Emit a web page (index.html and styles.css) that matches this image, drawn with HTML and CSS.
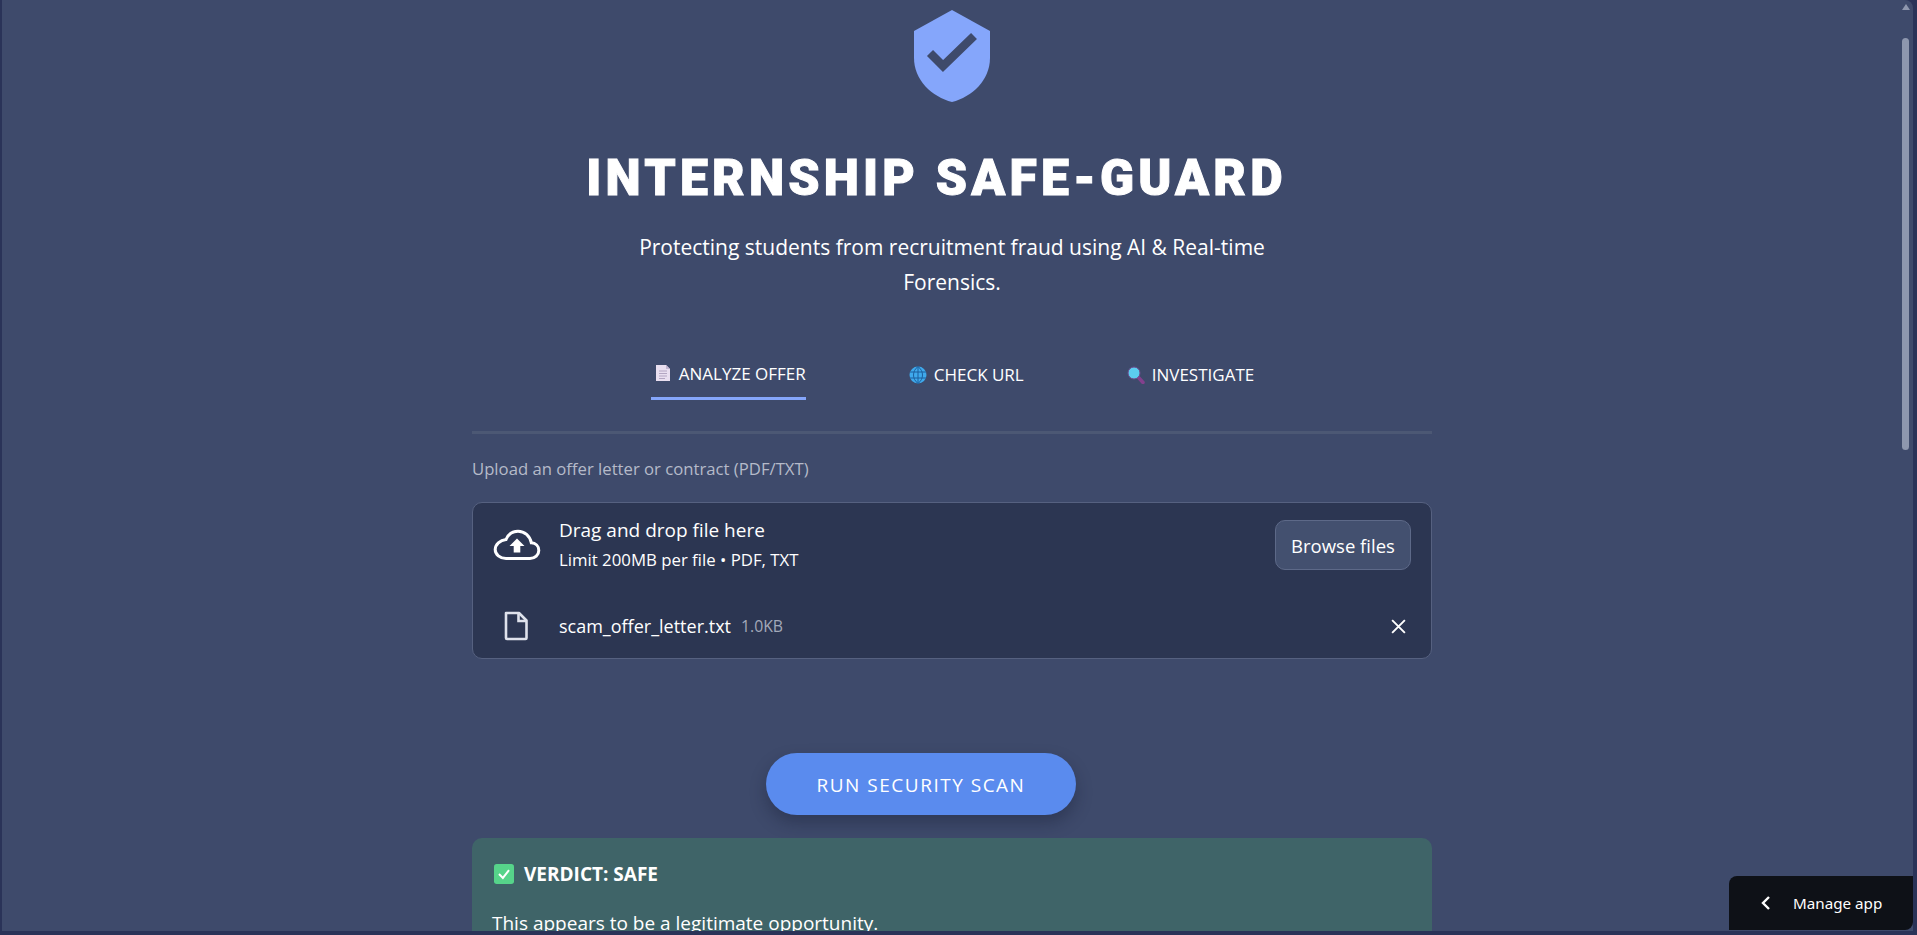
FILE: index.html
```html
<!DOCTYPE html>
<html lang="en">
<head>
    <meta charset="UTF-8">
    <meta name="viewport" content="width=device-width, initial-scale=1.0">
    <title>Internship Safe-Guard</title>
    <link rel="stylesheet" href="styles.css">
</head>
<body>
    <div class="app">
        <main class="content">
            <svg class="shield" viewBox="0 0 76 92" aria-hidden="true">
                <path d="M38 0 L76 21 V48 C76 70 58 87 38 92 C18 87 0 70 0 48 V21 Z" fill="#85a6fb"/>
                <path d="M16 43 L29 56 L60 26" fill="none" stroke="#3e4a6b" stroke-width="8.500"/>
            </svg>
            <h1>INTERNSHIP SAFE-GUARD</h1>
            <p class="tagline">Protecting students from recruitment fraud using AI &amp; Real-time Forensics.</p>

            <div class="tabs">
                <a class="tab active" href="#offer">
                    <svg class="emoji" viewBox="0 0 16 18" aria-hidden="true">
                        <path d="M1 1 H11 L15 5 V17 H1 Z" fill="#e9dff0"/>
                        <path d="M11 1 L15 5 H11 Z" fill="#c4b6d2"/>
                        <path d="M4 7 H12 M4 9.500 H12 M4 12 H12 M4 14.500 H10" stroke="#b3a6c2" stroke-width="1"/>
                    </svg>
                    ANALYZE OFFER
                </a>
                <a class="tab" href="#url">
                    <svg class="emoji" viewBox="0 0 18 18" aria-hidden="true">
                        <circle cx="9" cy="9" r="8.500" fill="#3fa9ec"/>
                        <path d="M1 6 H17 M1 12 H17 M9 .5 V17.500 M9 .5 C3 5 3 13 9 17.500 M9 .5 C15 5 15 13 9 17.500" fill="none" stroke="#1c5f9e" stroke-width="1"/>
                    </svg>
                    CHECK URL
                </a>
                <a class="tab" href="#investigate">
                    <svg class="emoji" viewBox="0 0 18 18" aria-hidden="true">
                        <path d="M11.500 11.500 L16 16.500" stroke="#83408d" stroke-width="3.500" stroke-linecap="round"/>
                        <circle cx="7" cy="7" r="6" fill="#5ccdf0" stroke="#6c4a8c" stroke-width="1"/>
                    </svg>
                    INVESTIGATE
                </a>
            </div>

            <label class="upload-label">Upload an offer letter or contract (PDF/TXT)</label>
            <section class="uploader">
                <div class="drop-row">
                    <svg class="cloud" viewBox="0 0 48 32" aria-hidden="true">
                        <path d="M13 29.500 H37 C42 29.500 45.800 26 45.800 21.500 C45.800 17 42.500 14 38.300 13.800 C37 7 31.500 2.200 25 2.200 C19.500 2.200 15 5.500 13 10.500 C7 11 2.200 15.500 2.200 20.500 C2.200 25.500 7 29.500 13 29.500 Z" fill="none" stroke="#fff" stroke-width="3"/>
                        <path d="M24 9.500 L31.500 17 H27.300 V23.500 H20.700 V17 H16.500 Z" fill="#fff"/>
                    </svg>
                    <div class="drop-text">
                        <div class="drop-title">Drag and drop file here</div>
                        <div class="drop-limit">Limit 200MB per file • PDF, TXT</div>
                    </div>
                    <button class="browse" type="button">Browse files</button>
                </div>
                <div class="file-row">
                    <svg class="file-icon" viewBox="0 0 24 30" aria-hidden="true">
                        <path d="M2 2 H15 L22.500 9.500 V27 A1 1 0 0 1 21.500 28 H3 A1 1 0 0 1 2 27 Z" fill="none" stroke="#dfe2ec" stroke-width="2.600" stroke-linejoin="round"/>
                        <path d="M14.500 2 V10 H22.500" fill="none" stroke="#dfe2ec" stroke-width="2.600"/>
                    </svg>
                    <span class="file-name">scam_offer_letter.txt</span>
                    <span class="file-size">1.0KB</span>
                    <svg class="file-remove" viewBox="0 0 16 16" aria-hidden="true">
                        <path d="M2 2 L14 14 M14 2 L2 14" stroke="#fff" stroke-width="1.800"/>
                    </svg>
                </div>
            </section>

            <button class="scan" type="button">RUN SECURITY SCAN</button>

            <section class="verdict">
                <h3>
                    <svg class="emoji verdict-icon" viewBox="0 0 18 18" aria-hidden="true">
                        <rect x="0" y="0" width="18" height="18" rx="2.500" fill="#56d48a"/>
                        <path d="M4.500 9 L8 12.500 L13.500 5.500" fill="none" stroke="#fff" stroke-width="1.800"/>
                    </svg>
                    VERDICT: SAFE
                </h3>
                <p>This appears to be a legitimate opportunity.</p>
            </section>
        </main>

        <div class="scrollbar">
            <span class="scroll-up"></span>
            <span class="scroll-thumb"></span>
        </div>

        <div class="manage">
            <svg class="manage-arrow" viewBox="0 0 12 16" aria-hidden="true">
                <path d="M9 2 L3 8 L9 14" fill="none" stroke="#fff" stroke-width="2.400"/>
            </svg>
            Manage app
        </div>
    </div>
</body>
</html>
```
FILE: styles.css
```css
html, body {
    height: 100%;
    margin: 0;
    overflow: hidden;
}

body {
    background-color: #2a3358;
    font-family: 'Open Sans', 'Noto Sans', sans-serif;
    color: #fff;
}

.app {
    position: relative;
    height: 931px;
    margin-left: 2px;
    margin-right: 4px;
    overflow: hidden;
    background-color: #3e4a6b;
    border-radius: 0 8px 0 0;
}

.content {
    width: 960px;
    margin-left: 470px;
    padding-top: 10px;
    display: flex;
    flex-direction: column;
}

.shield {
    display: block;
    width: 76px;
    height: 92px;
    align-self: center;
}

h1 {
    margin: 46px 0 0;
    padding-right: 31px;
    font-family: 'Roboto', sans-serif;
    font-weight: 900;
    font-size: 50px;
    line-height: 60px;
    letter-spacing: 4.200px;
    -webkit-text-stroke: 1px #fff;
    text-align: center;
}

.tagline {
    width: 660px;
    align-self: center;
    margin: 22px 0 0;
    font-size: 21px;
    line-height: 35px;
    text-align: center;
}

.tabs {
    display: flex;
    justify-content: center;
    gap: 100px;
    margin-top: 49px;
    height: 82px;
    border-bottom: 3px solid #4c5874;
    padding-left: 1px;
}

.tab {
    height: 51px;
    padding: 0 0 0 3px;
    display: flex;
    align-items: center;
    gap: 7px;
    box-sizing: border-box;
    color: #fff;
    text-decoration: none;
    font-size: 17px;
}

.tab.active {
    border-bottom: 3px solid #85a6fb;
}

.emoji {
    width: 18px;
    height: 18px;
    flex: none;
}

.upload-label {
    margin-top: 24px;
    font-size: 16.700px;
    line-height: 22px;
    color: #b5bac9;
}

.uploader {
    margin-top: 22px;
    height: 157px;
    box-sizing: border-box;
    background-color: #2c3652;
    border: 1px solid #566180;
    border-radius: 10px;
    padding: 17px 20px 0 20px;
}

.drop-row {
    display: flex;
    align-items: center;
    height: 50px;
}

.cloud {
    width: 48px;
    height: 32px;
    flex: none;
    margin-right: 18px;
}

.drop-text {
    flex: 1;
}

.drop-title {
    font-size: 19px;
    line-height: 28px;
}

.drop-limit {
    padding-top: 2px;
    font-size: 16.800px;
    line-height: 28px;
}

.browse {
    width: 136px;
    height: 50px;
    background-color: #43506f;
    border: 1px solid #5d6988;
    border-radius: 10px;
    color: #fff;
    font-family: inherit;
    font-size: 18.500px;
    cursor: pointer;
}

.file-row {
    display: flex;
    align-items: center;
    margin-top: 36px;
    height: 40px;
}

.file-icon {
    width: 24px;
    height: 30px;
    margin: 0 31px 0 11px;
    flex: none;
}

.file-name {
    font-size: 18px;
}

.file-size {
    margin-left: 10px;
    font-size: 15.800px;
    color: #a3a9b9;
}

.file-remove {
    width: 17px;
    height: 17px;
    margin-left: auto;
    margin-right: 4px;
}

.scan {
    align-self: flex-start;
    margin-top: 94px;
    margin-left: 294px;
    width: 310px;
    height: 62px;
    padding-top: 2px;
    background-color: #5a8bee;
    border: none;
    border-radius: 31px;
    box-shadow: 0 8px 16px rgba(20, 26, 50, 0.35);
    color: #fff;
    font-family: inherit;
    font-size: 19px;
    letter-spacing: 1.500px;
    cursor: pointer;
}

.verdict {
    margin-top: 23px;
    padding: 21px 20px 20px;
    background-color: #3f6468;
    border-radius: 10px;
}

.verdict h3 {
    display: flex;
    align-items: center;
    gap: 10px;
    margin: 0;
    font-size: 19px;
    font-weight: 700;
    line-height: 30px;
}

.verdict-icon {
    width: 20px;
    height: 20px;
    margin-left: 2px;
}

.verdict p {
    margin: 21px 0 0;
    font-size: 19px;
    line-height: 27px;
}

.scrollbar {
    position: absolute;
    top: 0;
    right: 0;
    width: 12px;
    height: 100%;
}

.scroll-up {
    position: absolute;
    top: 4px;
    left: 1px;
    width: 0;
    height: 0;
    border-left: 4px solid transparent;
    border-right: 4px solid transparent;
    border-bottom: 6px solid #8e97ae;
}

.scroll-thumb {
    position: absolute;
    top: 38px;
    left: 1px;
    width: 7px;
    height: 412px;
    background-color: #8e97ae;
    border-radius: 4px;
}

.manage {
    position: absolute;
    right: 0;
    bottom: 1px;
    width: 184px;
    height: 54px;
    box-sizing: border-box;
    padding-left: 31px;
    display: flex;
    align-items: center;
    gap: 21px;
    background-color: #0e1117;
    border-radius: 8px 0 8px 0;
    font-family: 'Noto Sans', sans-serif;
    font-size: 15.200px;
}

.manage-arrow {
    width: 12px;
    height: 16px;
    flex: none;
}
```
